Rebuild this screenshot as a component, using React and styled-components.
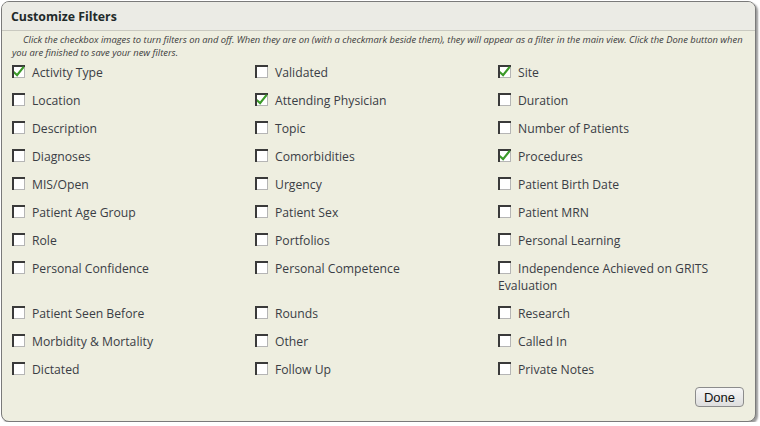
import React, { useState } from 'react';
import styled, { createGlobalStyle } from 'styled-components';

const GlobalStyle = createGlobalStyle`
  html, body {
    margin: 0;
    padding: 0;
    background: #ffffff;
  }
`;

const Dialog = styled.div`
  box-sizing: border-box;
  width: 755px;
  height: 421px;
  margin: 1px 0 0 1px;
  border: 1px solid #7a7a7a;
  border-radius: 8px;
  background-color: #eeeee0;
  box-shadow: 2px 2px 2px #9a9a9a;
  overflow: hidden;
  display: flex;
  flex-direction: column;
  font-family: "Open Sans", "Noto Sans", sans-serif;
`;

const Header = styled.div`
  height: 28px;
  display: flex;
  align-items: center;
  padding-left: 9px;
  background-color: #ebebe5;
  border-bottom: 1px solid #c9c9c0;
  font-size: 12.3px;
  font-weight: bold;
  color: #1f2a2a;
`;

const Body = styled.div`
  flex: 1;
  display: flex;
  flex-direction: column;
  padding: 2px 10px 0 10px;
`;

const Hint = styled.p`
  margin: 0 0 5px 0;
  text-indent: 11px;
  font-size: 9.4px;
  font-style: italic;
  line-height: 13px;
  color: #3c3c3c;
`;

const Grid = styled.div`
  display: grid;
  grid-template-columns: 243px 243px 1fr;
  row-gap: 11px;
`;

const Item = styled.div`
  font-size: 12.2px;
  line-height: 17px;
  color: #3a3d45;
  cursor: pointer;
`;

const Box = styled.span`
  display: inline-block;
  width: 13px;
  height: 13px;
  margin-right: 7px;
  vertical-align: -1px;
`;

const Footer = styled.div`
  display: flex;
  justify-content: flex-end;
  margin-top: auto;
  padding: 0 1px 14px 0;
`;

const DoneButton = styled.button`
  height: 20px;
  width: 49px;
  padding: 0;
  border: 1px solid #8c8c8c;
  border-radius: 4px;
  background: linear-gradient(#f7f7f7, #dedede);
  font-family: "Liberation Sans", Arial, sans-serif;
  font-size: 13px;
  color: #111;
  cursor: pointer;
`;

const CheckIcon = ({ checked }) => (
  <svg width="13" height="13" viewBox="0 0 13 13">
    <rect x="0" y="0" width="13" height="13" fill="#3a3a3a" />
    <rect x="2" y="2" width="11" height="11" fill="#b5b5b5" />
    <rect x="2" y="2" width="10" height="10" fill="#ffffff" />
    {checked && (
      <path d="M2 6 L5 8.6 L11 1 L12.5 2.6 L5.2 11.8 L2 8.8 Z" fill="#3c9a2a" />
    )}
  </svg>
);

const initial = [
  ['Activity Type', true], ['Validated', false], ['Site', true],
  ['Location', false], ['Attending Physician', true], ['Duration', false],
  ['Description', false], ['Topic', false], ['Number of Patients', false],
  ['Diagnoses', false], ['Comorbidities', false], ['Procedures', true],
  ['MIS/Open', false], ['Urgency', false], ['Patient Birth Date', false],
  ['Patient Age Group', false], ['Patient Sex', false], ['Patient MRN', false],
  ['Role', false], ['Portfolios', false], ['Personal Learning', false],
  ['Personal Confidence', false], ['Personal Competence', false], ['Independence Achieved on GRITS Evaluation', false],
  ['Patient Seen Before', false], ['Rounds', false], ['Research', false],
  ['Morbidity & Mortality', false], ['Other', false], ['Called In', false],
  ['Dictated', false], ['Follow Up', false], ['Private Notes', false],
];

const App = () => {
  const [filters, setFilters] = useState(initial);

  // 체크박스 토글
  const toggle = (i) => {
    setFilters((prev) => prev.map((f, idx) => (idx === i ? [f[0], !f[1]] : f)));
  };

  return (
    <>
      <GlobalStyle />
      <Dialog>
        <Header>Customize Filters</Header>
        <Body>
          <Hint>
            Click the checkbox images to turn filters on and off. When they are on (with a checkmark beside them), they will appear as a filter in the main view. Click the Done button when you are finished to save your new filters.
          </Hint>
          <Grid>
            {filters.map(([name, on], i) => (
              <Item key={name} onClick={() => toggle(i)}>
                <Box><CheckIcon checked={on} /></Box>
                {name}
              </Item>
            ))}
          </Grid>
          <Footer>
            <DoneButton type="button">Done</DoneButton>
          </Footer>
        </Body>
      </Dialog>
    </>
  );
};

export default App;
